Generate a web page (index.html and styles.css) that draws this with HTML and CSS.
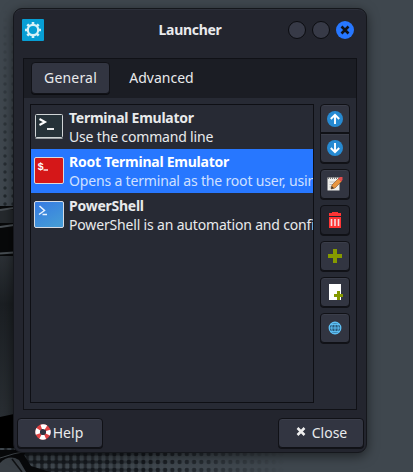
FILE: index.html
```html
<!DOCTYPE html>
<html lang="en">
<head>
<meta charset="utf-8">
<title>Launcher</title>
<link rel="stylesheet" href="styles.css">
</head>
<body>
<svg class="wallpaper" width="413" height="472" viewBox="0 0 413 472">
  <defs>
    <pattern id="dots" x="1" y="0" width="8" height="8" patternUnits="userSpaceOnUse"><circle cx="4" cy="4" r="1.7" fill="#20262b"/></pattern>
    <pattern id="mesh" x="2" y="450" width="7.250" height="8" patternUnits="userSpaceOnUse"><circle cx="3.600" cy="4" r="2.200" fill="#15191e"/></pattern>
    <pattern id="grid" x="2" y="450" width="7.250" height="8" patternUnits="userSpaceOnUse"><path d="M0 4H7.250M3.600 0V8" stroke="#1d2126" stroke-width="3"/></pattern>
    <linearGradient id="fade" x1="0" y1="0" x2="0" y2="1"><stop offset="0" stop-color="#000"/><stop offset="1" stop-color="#fff"/></linearGradient>
    <linearGradient id="fadex" x1="0" y1="0" x2="1" y2="0"><stop offset=".5" stop-color="#fff"/><stop offset="1" stop-color="#000"/></linearGradient>
    <linearGradient id="fadegrid" x1="0" y1="0" x2="1" y2="0"><stop offset=".25" stop-color="#fff"/><stop offset=".6" stop-color="#000"/></linearGradient>
    <mask id="fademask"><rect y="10" width="30" height="200" fill="url(#fade)"/></mask>
    <mask id="meshmask"><rect y="440" width="285" height="32" fill="url(#fadex)"/></mask>
    <mask id="gridmask"><rect y="440" width="285" height="32" fill="url(#fadegrid)"/></mask>
    <linearGradient id="panel" x1="0" y1="0" x2="0" y2="1"><stop offset="0" stop-color="#2b3035"/><stop offset=".3" stop-color="#1b1f23"/><stop offset="1" stop-color="#292e33"/></linearGradient>
  </defs>
  <rect width="413" height="472" fill="#3f474e"/>
  <rect width="14" height="210" fill="url(#dots)" mask="url(#fademask)"/>
  <rect y="206" width="14" height="266" fill="#08090a"/>
  <rect y="210" width="14" height="13" fill="#25292d"/>
  <path d="M0 210L14 208M0 227L14 225M0 253.500L14 252.500" stroke="#484e53" stroke-width="2"/>
  <rect y="256" width="14" height="161" fill="url(#panel)"/>
  <path d="M0 417L14 414V450H0Z" fill="#000"/>
  <rect y="448" width="285" height="24" fill="#3f474e"/>
  <rect y="448" width="285" height="24" fill="url(#grid)" mask="url(#gridmask)"/>
  <rect y="448" width="285" height="24" fill="url(#mesh)" mask="url(#meshmask)"/>
  <path d="M0 450H28L24 455L31 466L50 472H0Z" fill="#08090b"/>
  <path d="M0 463Q9 454 19 460L26 472H0Z" fill="#393f45"/>
  <path d="M0 458Q14 453 28 451" fill="none" stroke="#41474c"/>
  <path d="M12 459L22 472" stroke="#101214" stroke-width="1.500"/>
</svg>
<main class="window">
  <header class="titlebar">
    <svg class="app-icon" width="22" height="22" viewBox="0 0 22 22"><rect width="22" height="22" rx="1" fill="#079ed4"/><g fill="none" stroke="#d8f1f7"><circle cx="11" cy="11" r="5.200" stroke-width="2.200"/><path d="M11 3v3M11 16v3M3 11h3M16 11h3M5.300 5.300l2.200 2.200M14.500 14.500l2.200 2.200M5.300 16.700l2.200-2.200M14.500 7.500l2.200-2.200" stroke-width="2.600"/></g></svg>
    <h1>Launcher</h1>
    <div class="controls"><i></i><i></i><i class="close-control"><svg width="18" height="18" viewBox="0 0 18 18"><path d="M5.5 5.5l7 7m0-7l-7 7" stroke="#101217" stroke-width="2.6"/></svg></i></div>
  </header>
  <section class="notebook">
    <nav class="tabs"><span class="tab active">General</span><span class="tab">Advanced</span></nav>
    <div class="page">
      <ul class="list">
        <li>
          <svg width="30" height="30" viewBox="0 0 30 30"><rect x="1.5" y="4.500" width="27" height="23" rx="1" fill="#263239" stroke="#d0d4d6"/><path d="M1.500 28.500H28.500" stroke="#969c9f"/><path d="M5.500 9l5.500 3-5.500 3" fill="none" stroke="#fff" stroke-width="2"/><path d="M13 19h7" stroke="#fff" stroke-width="1.8"/></svg>
          <div class="entry"><b>Terminal Emulator</b><span>Use the command line</span></div>
        </li>
        <li class="selected">
          <svg width="30" height="30" viewBox="0 0 30 30"><rect x=".5" y="3.5" width="29" height="26" rx="1.5" fill="#d51718" stroke="#d9dadd"/><text x="3.500" y="15.500" class="prompt">$</text><path d="M9.500 16h4.500" stroke="#fff" stroke-width="1.300"/></svg>
          <div class="entry"><b>Root Terminal Emulator</b><span>Opens a terminal as the root user, using pkexec</span></div>
        </li>
        <li>
          <svg width="30" height="30" viewBox="0 0 30 30"><defs><linearGradient id="ps" x1="0" y1="0" x2=".6" y2="1"><stop stop-color="#3579e3"/><stop offset="1" stop-color="#449ad7"/></linearGradient></defs><rect x=".5" y="3.5" width="29" height="26" rx="1.5" fill="url(#ps)" stroke="#d6dbe4"/><path d="M5.500 8l5 4.500-5.500 4M8.500 16.500h4.500" fill="none" stroke="#e8f2ff" stroke-width="1.500"/></svg>
          <div class="entry"><b>PowerShell</b><span>PowerShell is an automation and configuration tool</span></div>
        </li>
      </ul>
      <div class="tools">
        <div class="pair">
          <button aria-label="Move up"><svg width="16" height="16" viewBox="0 0 16 16"><circle cx="8" cy="8" r="8" fill="#268ad2"/><path d="M8 13V4M3.800 8L8 3.800 12.200 8" fill="none" stroke="#fff" stroke-width="1.9"/></svg></button>
          <button aria-label="Move down"><svg width="16" height="16" viewBox="0 0 16 16"><circle cx="8" cy="8" r="8" fill="#268ad2"/><path d="M8 3V12M3.800 8L8 12.200 12.200 8" fill="none" stroke="#fff" stroke-width="1.9"/></svg></button>
        </div>
        <button aria-label="Edit"><svg width="16" height="16" viewBox="0 0 16 16"><path d="M.5 1.500h12v13H.5z" fill="#efefeb"/><path d="M1 2h11" stroke="#777" stroke-width="2" stroke-dasharray="1 1"/><path d="M2.500 6h7M2.500 8.500h5M2.500 11h3" stroke="#bbb"/><path d="M4 13l1-4 6.500-6.500 3 3L8 12z" fill="#e8953f" stroke="#855229" stroke-width=".6"/><path d="M11 3l2-2h2.500v3l-1.500 1.500z" fill="#e34d4d"/><path d="M4 13l.7-3L7 12.300z" fill="#3d352e"/></svg></button>
        <button class="dark" aria-label="Remove"><svg width="16" height="16" viewBox="0 0 16 16"><path d="M2 1h3V0h6v1h3v3H2zM2 5h12v11H2z" fill="#ff3434"/><path d="M4.500 7v7M8 7v7M11.500 7v7" stroke="#f7dce0" stroke-width="1.6"/></svg></button>
        <button aria-label="Add"><svg width="16" height="16" viewBox="0 0 16 16"><path d="M6 1h4v5h5v4h-5v5H6v-5H1V6h5z" fill="#859900"/></svg></button>
        <button aria-label="New item"><svg width="16" height="16" viewBox="0 0 16 16"><path d="M2 0h12v16H2z" fill="#fff"/><path d="M10 7h3v3h3v3h-3v3h-3v-3H7v-3h3z" fill="#859900"/></svg></button>
        <button aria-label="Add link"><svg width="16" height="16" viewBox="0 0 16 16"><circle cx="8" cy="8" r="6" fill="#2a5a7c"/><g fill="none" stroke="#5fc3f8"><path d="M2 8h12M3 4.500h10M3 11.500h10M8 2v12" stroke-width=".9"/><circle cx="8" cy="8" r="5.800" stroke-width="1.200"/><ellipse cx="8" cy="8" rx="3.300" ry="5.700" stroke-width=".9"/></g></svg></button>
      </div>
    </div>
  </section>
  <footer>
    <button class="action help"><svg width="16" height="16" viewBox="0 0 16 16"><circle cx="8" cy="8" r="5.400" fill="none" stroke="#e14344" stroke-width="4.600"/><circle cx="8" cy="8" r="5.400" fill="none" stroke="#fff" stroke-width="4.600" stroke-dasharray="5 3.482" stroke-dashoffset="2.500"/></svg><span>Help</span></button>
    <button class="action close"><svg width="16" height="16" viewBox="0 0 16 16"><path d="M4.500 4l7 7m0-7l-7 7" stroke="#eee" stroke-width="2.500"/></svg><span>Close</span></button>
  </footer>
</main>
</body>
</html>
```
FILE: styles.css
```css
* { box-sizing: border-box; }
body { margin: 0; width: 413px; height: 472px; overflow: hidden; padding: 8px 0 0 13px; font: 14px/19px "Noto Sans", sans-serif; color: #e9eaec; }
svg { display: block; flex: none; }
.wallpaper { position: absolute; left: 0; top: 0; z-index: -1; }
.window { width: 354px; height: 445px; border: 1px solid #15171c; border-radius: 9px; background: #23252e; box-shadow: inset 0 1px #2d303a, 0 3px 12px #0008; padding: 0 3px; }
.titlebar { height: 49px; display: flex; align-items: center; padding: 0 9px 8px 5px; }
.app-icon, .controls { margin-top: 1px; }
h1 { margin: 0 0 0 48px; flex: 1; text-align: center; font-size: 14px; font-weight: 700; line-height: 19px; letter-spacing: -.3px; }
.controls { display: flex; gap: 6px; }
.controls i { width: 18px; height: 18px; border: 1px solid #0b0c10; border-radius: 50%; background: #373a47; }
.controls .close-control { border: 0; background: #2777ff; }
.notebook { width: 334px; height: 352px; margin-left: 6px; border: 1px solid #101116; background: #272a34; }
.tabs { height: 39px; padding: 3px 7px; background: #1b1d24; display: flex; }
.tab { height: 32px; width: 79px; margin-right: 12px; text-align: center; line-height: 29px; border: 1px solid transparent; }
.active { background: #323541; border-color: #111217; border-radius: 4px; box-shadow: 0 1px #0c0d11; letter-spacing: .2px; }
.page { padding: 6px; display: flex; gap: 6px; }
.list { width: 284px; height: 299px; margin: 0; padding: 0; list-style: none; border: 1px solid #0e0f14; overflow: hidden; }
li { height: 44px; display: flex; gap: 5px; padding: 5px 0 0 3px; white-space: nowrap; }
.entry { margin-top: -2px; display: flex; flex-direction: column; letter-spacing: -.17px; }
.entry b { font-weight: 700; letter-spacing: -.25px; }
.selected { background: #2777ff; }
.selected b { color: #fff; }
.selected span { color: #cfe0ff; }
.prompt { font: bold 10.5px "Liberation Mono", monospace; fill: #fff; }
button { font: inherit; color: inherit; padding: 0; border: 1px solid #101116; border-radius: 4px; background: #323541; box-shadow: inset 0 1px #3b3e4a, 0 1px #111217; display: flex; align-items: center; justify-content: center; }
.tools { display: flex; flex-direction: column; gap: 6px; }
.tools button { width: 30px; height: 30px; }
.tools .dark { background: #23252e; box-shadow: 0 1px #111217; }
.pair button:first-child { border-radius: 4px 4px 0 0; height: 29px; }
.pair button:last-child { border-radius: 0 0 4px 4px; height: 30px; }
footer { margin: 8px -1px 0 0; display: flex; justify-content: space-between; }
.action { width: 86px; height: 30px; gap: 3px; line-height: 17px; padding: 0 2px 2px 0; }
.help { gap: 2px; }
```
